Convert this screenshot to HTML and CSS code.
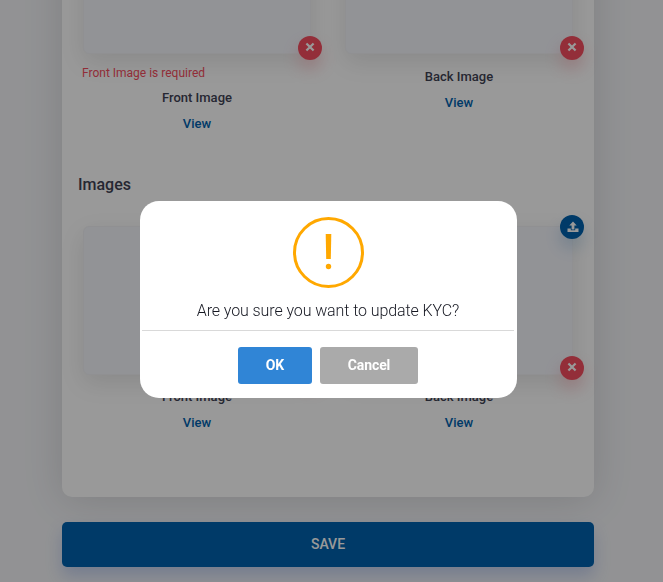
FILE: index.html
```html
<!DOCTYPE html>
<html lang="en">
<head>
<meta charset="utf-8">
<title>Update KYC</title>
<link rel="stylesheet" href="styles.css">
</head>
<body>
<svg width="0" height="0" class="sprite" aria-hidden="true">
  <symbol id="times" viewBox="0 0 10 10"><path d="M2.2 2.2 7.8 7.8M7.8 2.2 2.2 7.8" fill="none" stroke="currentColor" stroke-width="2.2" stroke-linecap="square"/></symbol>
  <symbol id="upload" viewBox="0 0 12 12"><path fill="currentColor" d="M6 .5 9.7 4.5H7.4V8.4H4.6V4.5H2.3ZM.5 7.6H3.8V9.2H8.2V7.6H11.5V11H.5Z"/></symbol>
</svg>
<main class="page">
  <section class="card">
    <div class="row row-first">
      <div class="upload">
        <div class="preview"><span class="badge remove"><svg><use href="#times"/></svg></span></div>
        <p class="error">Front Image is required</p>
        <p class="label">Front Image</p>
        <a class="view">View</a>
      </div>
      <div class="upload">
        <div class="preview"><span class="badge remove"><svg><use href="#times"/></svg></span></div>
        <p class="label">Back Image</p>
        <a class="view">View</a>
      </div>
    </div>
    <h3 class="heading">Images</h3>
    <div class="row">
      <div class="upload">
        <div class="preview"><span class="badge add"><svg><use href="#upload"/></svg></span><span class="badge remove"><svg><use href="#times"/></svg></span></div>
        <p class="label">Front Image</p>
        <a class="view">View</a>
      </div>
      <div class="upload">
        <div class="preview"><span class="badge add"><svg><use href="#upload"/></svg></span><span class="badge remove"><svg><use href="#times"/></svg></span></div>
        <p class="label">Back Image</p>
        <a class="view">View</a>
      </div>
    </div>
  </section>
  <button class="save">SAVE</button>
</main>
<div class="overlay">
  <div class="dialog" role="dialog">
    <svg class="warning" viewBox="0 0 71 71"><circle cx="35.5" cy="35.5" r="34" fill="none" stroke="#ffa800" stroke-width="3"/><path d="M32.7 17h5.6l-.5 25h-4.6z" fill="#ffa800"/><circle cx="35.5" cy="49.5" r="2.7" fill="#ffa800"/></svg>
    <p class="message">Are you sure you want to update KYC?</p>
    <div class="actions">
      <button class="btn ok">OK</button>
      <button class="btn cancel">Cancel</button>
    </div>
  </div>
</div>
</body>
</html>
```
FILE: styles.css
```css
* { box-sizing: border-box; }
body {
  margin: 0;
  height: 582px;
  overflow: hidden;
  background: #f3f4f7;
  color: #3f4254;
  font: 400 13px/20px Roboto, sans-serif;
}
p, h3 { margin: 0; }
button { border: 0; font-family: inherit; }
.sprite { position: absolute; }
.page { height: 582px; padding: 0 69px 0 62px; overflow: hidden; }
.card {
  height: 617px;
  margin-top: -120px;
  padding: 25px 21px 0;
  background: #fff;
  border-radius: 10px;
  box-shadow: 0 4px 40px rgba(0, 0, 0, .13);
}
.row { display: grid; grid-template-columns: 228px 228px; gap: 34px; height: 220px; }
.row-first { height: 248px; }
.upload { display: flex; flex-direction: column; align-items: center; }
.preview {
  position: relative;
  width: 228px;
  height: 149px;
  margin-bottom: 12px;
  flex: none;
  background: #f3f5fb;
  border: 1px solid #f1f1f4;
  border-radius: 6px;
  box-shadow: 0 8px 24px rgba(0, 0, 0, .1);
}
.row-first .preview { margin-bottom: 13px; }
.badge {
  position: absolute;
  right: -12px;
  display: grid;
  place-items: center;
  width: 24px;
  height: 24px;
  border-radius: 50%;
  color: #fff;
}
.remove { bottom: -7px; background: #f64e60; box-shadow: 0 9px 16px rgba(246, 78, 96, .25); }
.row:not(.row-first) .remove { bottom: -6px; }
.add { top: -12px; background: #0062ad; box-shadow: 0 9px 16px rgba(0, 98, 173, .2); }
.remove svg { width: 10px; height: 10px; margin: 0 1px 2px 0; }
.add svg { width: 12px; height: 12px; margin: 0 0 1px 1px; }
.error { align-self: flex-start; margin: -4px 0 5px -1px; color: #f64e60; font-size: 12px; }
.label { font-weight: 500; margin-bottom: 6px; }
.view { color: #0062ad; font-weight: 500; }
.heading { margin: 20px 0 29px -5px; font-size: 16px; line-height: 24px; font-weight: 500; }
.save {
  display: block;
  width: 100%;
  height: 45px;
  margin-top: 25px;
  padding: 0 0 2px;
  border-radius: 5px;
  background: #0062ad;
  color: #fff;
  font-size: 14px;
  font-weight: 500;
  box-shadow: 0 9px 16px rgba(54, 104, 210, .25);
}
.overlay { position: fixed; inset: 0; background: rgba(0, 0, 0, .4); padding: 201px 0 0 140px; }
.dialog {
  display: flex;
  flex-direction: column;
  align-items: center;
  width: 377px;
  height: 197px;
  padding: 16px 3px 0 2px;
  background: #fff;
  border-radius: 19px;
}
.warning { width: 71px; height: 71px; }
.message { margin: 10px 0 7px; color: #161822; font-size: 16px; font-weight: 300; line-height: 25px; letter-spacing: -.1px; }
.actions {
  display: flex;
  justify-content: center;
  gap: 8px;
  width: 100%;
  padding-top: 16px;
  border-top: 1px solid #d9d9d9;
}
.btn { height: 37px; padding: 0 0 2px; border-radius: 3px; color: #fff; font-size: 14px; font-weight: 700; letter-spacing: -.1px; }
.ok { width: 74px; background: #3085d6; }
.cancel { width: 98px; background: #aaa; }
```
